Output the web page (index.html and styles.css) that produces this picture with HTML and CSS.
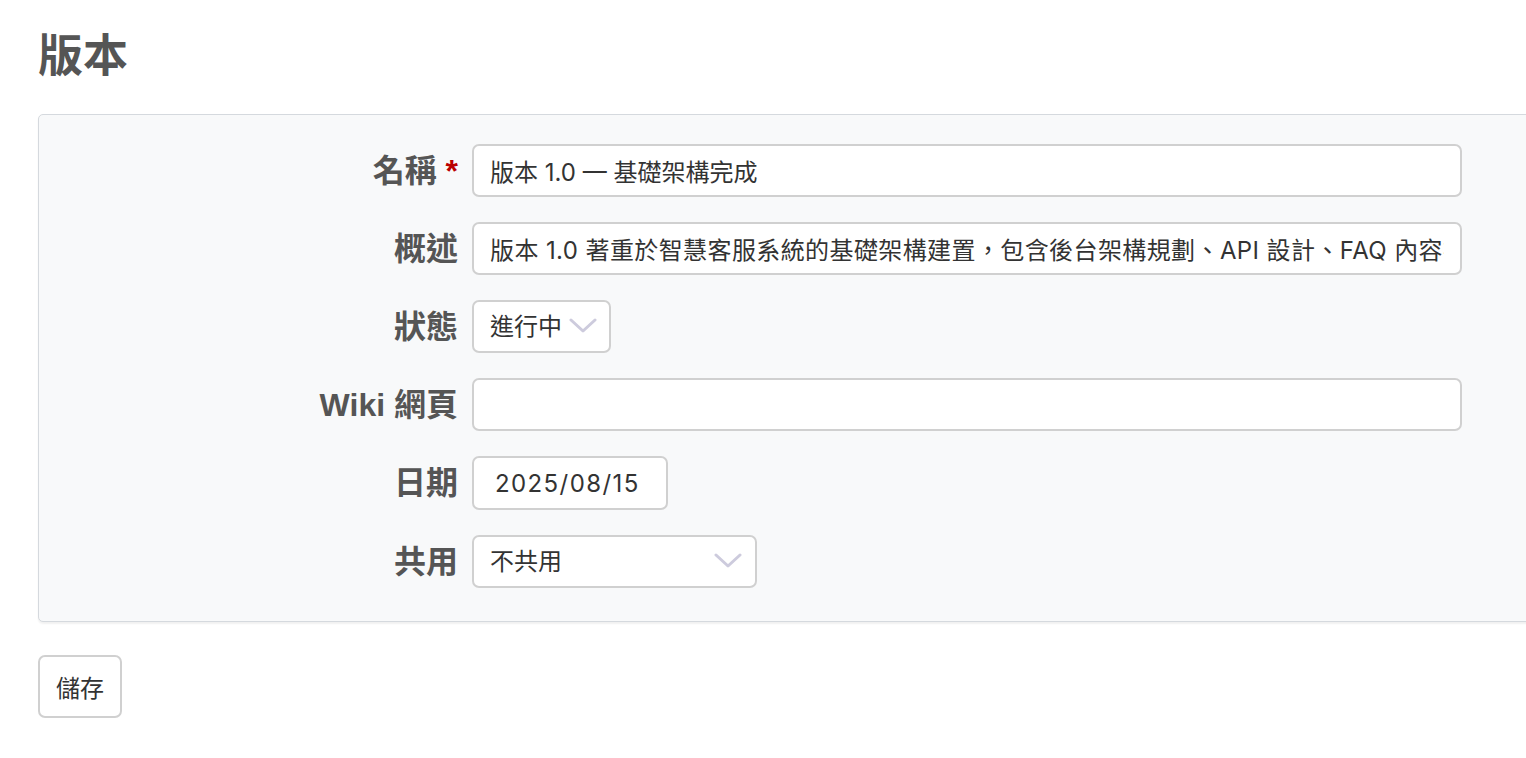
FILE: index.html
```html
<!DOCTYPE html>
<html lang="zh-Hant">
<head>
    <meta charset="UTF-8">
    <meta name="viewport" content="width=device-width, initial-scale=1.0">
    <title>版本</title>
    <link rel="stylesheet" href="styles.css">
</head>
<body>
    <div class="content">
        <h2>版本</h2>
        <form class="version-form">
            <div class="box tabular">
                <p class="field">
                    <label for="version_name">名稱 <span class="required">*</span></label>
                    <input type="text" id="version_name" class="wide" value="版本 1.0 — 基礎架構完成">
                </p>
                <p class="field">
                    <label for="version_description">概述</label>
                    <input type="text" id="version_description" class="wide desc" value="版本 1.0 著重於智慧客服系統的基礎架構建置，包含後台架構規劃、API 設計、FAQ 內容初始化與測試。">
                </p>
                <p class="field">
                    <label for="version_status">狀態</label>
                    <span class="select-wrap status">
                        <select id="version_status">
                            <option>進行中</option>
                            <option>已鎖定</option>
                            <option>已結束</option>
                        </select>
                        <svg class="chevron" viewBox="0 0 28 15" width="28" height="15"><path d="M2 2 L14 13 L26 2" fill="none" stroke="#cdcbdd" stroke-width="3" stroke-linecap="round" stroke-linejoin="round"/></svg>
                    </span>
                </p>
                <p class="field">
                    <label for="version_wiki">Wiki 網頁</label>
                    <input type="text" id="version_wiki" class="wide" value="">
                </p>
                <p class="field">
                    <label for="version_date">日期</label>
                    <input type="text" id="version_date" class="date" value="2025/08/15">
                </p>
                <p class="field">
                    <label for="version_sharing">共用</label>
                    <span class="select-wrap sharing">
                        <select id="version_sharing">
                            <option>不共用</option>
                            <option>與子專案共用</option>
                            <option>與所有專案共用</option>
                        </select>
                        <svg class="chevron" viewBox="0 0 28 15" width="28" height="15"><path d="M2 2 L14 13 L26 2" fill="none" stroke="#cdcbdd" stroke-width="3" stroke-linecap="round" stroke-linejoin="round"/></svg>
                    </span>
                </p>
            </div>
            <button type="submit" class="save">儲存</button>
        </form>
    </div>
</body>
</html>
```

FILE: styles.css
```css
html, body {
    margin: 0;
    overflow: hidden;
}
body {
    font-family: "Liberation Sans", "Noto Sans CJK TC", sans-serif;
    color: #333;
    background: #fff;
}
.content {
    padding: 0 0 0 38px;
}
h2 {
    font-size: 45px;
    line-height: 54px;
    color: #555;
    font-weight: bold;
    margin: 30px 0 30px 0;
}
.box {
    background-color: #f8f9fa;
    border: 1px solid #d5d9de;
    border-radius: 5px;
    box-shadow: 0 2px 2px rgba(0, 0, 0, 0.06);
    width: 1600px;
    padding: 29px 0 33px 0;
    box-sizing: border-box;
}
.field {
    display: grid;
    grid-template-columns: 419px auto;
    column-gap: 14px;
    align-items: center;
    justify-content: start;
    height: 53px;
    margin: 0 0 25px 0;
}
.field:nth-child(5) {
    margin-bottom: 26px;
}
.field:last-child {
    margin-bottom: 0;
}
.field label {
    text-align: right;
    font-size: 32px;
    line-height: 40px;
    font-weight: bold;
    color: #555;
}
.required {
    color: #bb0000;
}
input, select, button {
    font-family: "Inter", "Noto Sans CJK TC", sans-serif;
    font-size: 24px;
    color: #333;
}
input {
    height: 53px;
    box-sizing: border-box;
    border: 2px solid #d0d0d0;
    border-radius: 7px;
    background: #fff;
    padding: 0 16px;
    outline: none;
}
.wide {
    width: 990px;
}
.desc {
    letter-spacing: 0.4px;
}
.date {
    width: 196px;
    height: 54px;
    padding-left: 21px;
    letter-spacing: 1.4px;
}
.select-wrap {
    position: relative;
    display: inline-block;
    height: 53px;
}
.select-wrap select {
    appearance: none;
    -webkit-appearance: none;
    height: 53px;
    border: 2px solid #d0d0d0;
    border-radius: 7px;
    background: #fff;
    padding: 0 16px;
    box-sizing: border-box;
    outline: none;
}
.select-wrap.status select {
    width: 139px;
}
.select-wrap.sharing select {
    width: 285px;
}
.chevron {
    position: absolute;
    top: 18px;
    pointer-events: none;
}
.select-wrap.status .chevron {
    right: 14px;
}
.select-wrap.sharing .chevron {
    right: 15px;
}
.save {
    margin-top: 33px;
    width: 84px;
    height: 63px;
    background: #fff;
    border: 2px solid #d0d0d0;
    border-radius: 7px;
    cursor: pointer;
}
.save:hover {
    background-color: #f4f4f4;
}
```
